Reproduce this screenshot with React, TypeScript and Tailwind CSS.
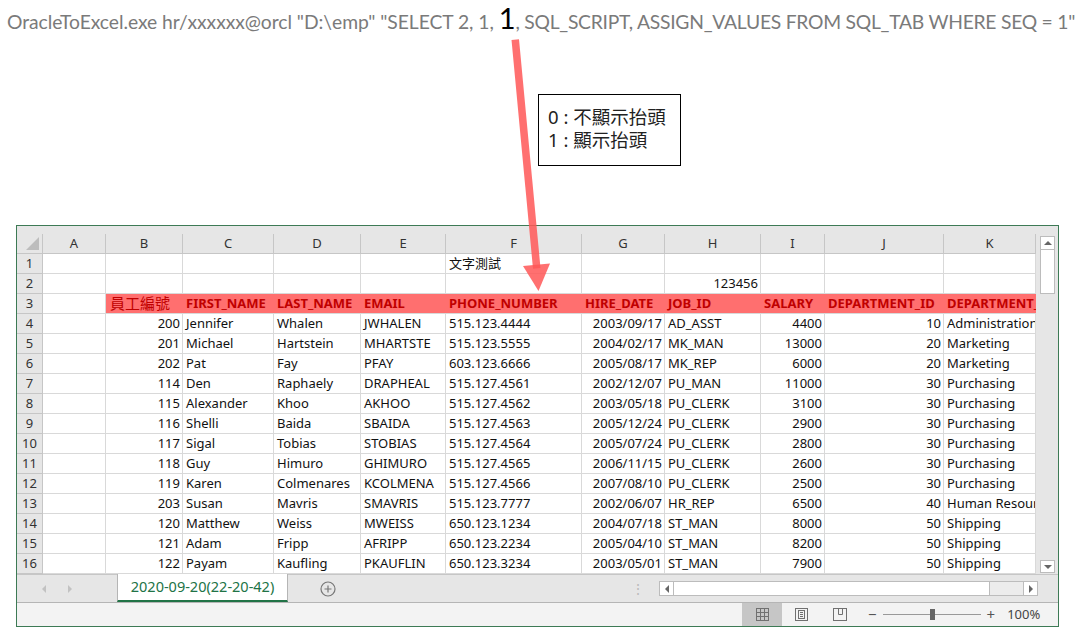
import React from "react"

const cellFont = "font-['Noto_Sans','Noto_Sans_CJK_TC',sans-serif]"

const letters = ["A", "B", "C", "D", "E", "F", "G", "H", "I", "J", "K"]

// r = right aligned
type Cell = string | { t: string; r: boolean }
const R = (t: string) => ({ t, r: true })

const rows: Cell[][] = [
  ["", "", "", "", "", "文字測試", "", "", "", "", ""],
  ["", "", "", "", "", "", "", R("123456"), "", "", ""],
  [],
  ["", R("200"), "Jennifer", "Whalen", "JWHALEN", "515.123.4444", R("2003/09/17"), "AD_ASST", R("4400"), R("10"), "Administration"],
  ["", R("201"), "Michael", "Hartstein", "MHARTSTE", "515.123.5555", R("2004/02/17"), "MK_MAN", R("13000"), R("20"), "Marketing"],
  ["", R("202"), "Pat", "Fay", "PFAY", "603.123.6666", R("2005/08/17"), "MK_REP", R("6000"), R("20"), "Marketing"],
  ["", R("114"), "Den", "Raphaely", "DRAPHEAL", "515.127.4561", R("2002/12/07"), "PU_MAN", R("11000"), R("30"), "Purchasing"],
  ["", R("115"), "Alexander", "Khoo", "AKHOO", "515.127.4562", R("2003/05/18"), "PU_CLERK", R("3100"), R("30"), "Purchasing"],
  ["", R("116"), "Shelli", "Baida", "SBAIDA", "515.127.4563", R("2005/12/24"), "PU_CLERK", R("2900"), R("30"), "Purchasing"],
  ["", R("117"), "Sigal", "Tobias", "STOBIAS", "515.127.4564", R("2005/07/24"), "PU_CLERK", R("2800"), R("30"), "Purchasing"],
  ["", R("118"), "Guy", "Himuro", "GHIMURO", "515.127.4565", R("2006/11/15"), "PU_CLERK", R("2600"), R("30"), "Purchasing"],
  ["", R("119"), "Karen", "Colmenares", "KCOLMENA", "515.127.4566", R("2007/08/10"), "PU_CLERK", R("2500"), R("30"), "Purchasing"],
  ["", R("203"), "Susan", "Mavris", "SMAVRIS", "515.123.7777", R("2002/06/07"), "HR_REP", R("6500"), R("40"), "Human Resources"],
  ["", R("120"), "Matthew", "Weiss", "MWEISS", "650.123.1234", R("2004/07/18"), "ST_MAN", R("8000"), R("50"), "Shipping"],
  ["", R("121"), "Adam", "Fripp", "AFRIPP", "650.123.2234", R("2005/04/10"), "ST_MAN", R("8200"), R("50"), "Shipping"],
  ["", R("122"), "Payam", "Kaufling", "PKAUFLIN", "650.123.3234", R("2003/05/01"), "ST_MAN", R("7900"), R("50"), "Shipping"],
  [],
]

const heads = ["員工編號", "FIRST_NAME", "LAST_NAME", "EMAIL", "PHONE_NUMBER", "HIRE_DATE", "JOB_ID", "SALARY", "DEPARTMENT_ID", "DEPARTMENT_NAME"]

const gridCols = "grid grid-cols-[26px_63px_77px_91px_87px_85px_136px_83px_96px_64px_119px_92px]"

function DataRow({ n, cells }: { n: number; cells: Cell[] }) {
  return (
    <div className={`${gridCols} h-[20px]`}>
      <div className="bg-[#e6e6e6] border-r border-b border-[#c6c6c6] text-center text-[13px] leading-[19px] text-[#333]">{n}</div>
      {letters.map((_, i) => {
        const c = cells[i] ?? ""
        const t = typeof c === "string" ? c : c.t
        const right = typeof c !== "string"
        return (
          <div
            key={i}
            className={`border-r border-b border-[#d9d9d9] px-[3px] text-[13px] leading-[19px] whitespace-nowrap overflow-hidden text-[#111] ${right ? "text-right pr-[2px]" : ""}`}
          >
            {t}
          </div>
        )
      })}
    </div>
  )
}

function HeadRow() {
  return (
    <div className={`${gridCols} h-[20px]`}>
      <div className="bg-[#e6e6e6] border-r border-b border-[#c6c6c6] text-center text-[13px] leading-[19px] text-[#333]">3</div>
      <div className="border-r border-b border-[#d9d9d9]" />
      {heads.map((h, i) => (
        <div
          key={h}
          className={`bg-[#ff6f6f] border-b border-[#d9d9d9] px-[3px] leading-[19px] whitespace-nowrap overflow-hidden text-[#c00000] ${i === 0 ? "text-[15px] pl-[4px]" : "text-[13px] font-bold"}`}
        >
          {h}
        </div>
      ))}
    </div>
  )
}

function GridIcon() {
  return (
    <svg width="13" height="13" viewBox="0 0 13 13" fill="none" stroke="#707070" strokeWidth="1">
      <rect x="0.5" y="0.5" width="12" height="12" />
      <path d="M4.5 0.5v12M8.5 0.5v12M0.5 4.5h12M0.5 8.5h12" />
    </svg>
  )
}

function PageIcon() {
  return (
    <svg width="13" height="13" viewBox="0 0 13 13" fill="none" stroke="#707070" strokeWidth="1">
      <rect x="0.5" y="0.5" width="12" height="12" />
      <rect x="3.5" y="2.5" width="6" height="8" />
      <path d="M5 4.5h3M5 6.5h3M5 8.5h3" />
    </svg>
  )
}

function BreakIcon() {
  return (
    <svg width="14" height="13" viewBox="0 0 14 13" fill="none" stroke="#707070" strokeWidth="1">
      <rect x="0.5" y="0.5" width="13" height="12" />
      <path d="M5.5 0.5v6h4v-6" />
    </svg>
  )
}

export default function App() {
  return (
    <div className={`relative w-[1089px] h-[639px] bg-white overflow-hidden ${cellFont}`}>
      {/* command line + note */}
      <div className="h-[225px]">
        <p className="pl-[7px] pt-[3px] h-[38px] whitespace-nowrap text-[19.3px] tracking-[-0.05px] text-[#7a7a7a] font-['Lato',sans-serif]">
          OracleToExcel.exe hr/xxxxxx@orcl "D:\emp" "SELECT 2, 1, <span className="text-[29px] leading-[30px] text-black">1</span><span className="tracking-[-0.25px]">, SQL_SCRIPT, ASSIGN_VALUES FROM SQL_TAB WHERE SEQ = 1"</span>
        </p>
        <div className="ml-[538px] mt-[56px] w-[143px] h-[72px] border border-black px-[9px] pt-[10px] text-[18.5px] leading-[23px] text-[#222]">
          <div>0 : 不顯示抬頭</div>
          <div>1 : 顯示抬頭</div>
        </div>
      </div>

      {/* excel window */}
      <div className="ml-[16px] w-[1043px] h-[402px] border border-[#3d7a55] bg-[#e6e6e6] flex flex-col">
        <div className="h-[8px]" />
        <div className="flex h-[340px]">
          <div className="w-[1019px] overflow-hidden bg-white">
            <div className={`${gridCols} h-[20px] bg-[#e6e6e6]`}>
              <div className="border-r border-b border-[#c6c6c6] flex items-end justify-end p-[3px]">
                <div className="w-0 h-0 border-l-[13px] border-l-transparent border-b-[13px] border-b-[#bdbdbd]" />
              </div>
              {letters.map((l) => (
                <div key={l} className="border-r border-b border-[#c6c6c6] text-center text-[13px] leading-[19px] text-[#333]">
                  {l}
                </div>
              ))}
            </div>
            {rows.map((r, i) =>
              i === 2 ? <HeadRow key={i} /> : <DataRow key={i} n={i + 1} cells={r} />
            )}
          </div>
          <div className="flex-1 pl-[4px] pr-[2px] pt-[2px] pb-[1px]">
            <div className="h-full flex flex-col w-[15px]">
              <div className="h-[14px] bg-white border border-[#bcbcbc] flex items-center justify-center">
                <div className="w-0 h-0 border-x-[4px] border-x-transparent border-b-[4px] border-b-[#666]" />
              </div>
              <div className="h-[44px] bg-white border border-[#bcbcbc] border-t-0" />
              <div className="flex-1" />
              <div className="h-[13px] bg-white border border-[#bcbcbc] flex items-center justify-center">
                <div className="w-0 h-0 border-x-[4px] border-x-transparent border-t-[4px] border-t-[#666]" />
              </div>
            </div>
          </div>
        </div>

        {/* sheet tabs */}
        <div className="h-[29px] flex border-t border-[#c6c6c6] border-b border-b-[#b5b5b5]">
          <div className="w-[100px] flex items-center pl-[25px] gap-[22px]">
            <div className="w-0 h-0 border-y-[4px] border-y-transparent border-r-[4px] border-r-[#c2c2c2]" />
            <div className="w-0 h-0 border-y-[4px] border-y-transparent border-l-[4px] border-l-[#c2c2c2]" />
          </div>
          <div className="w-[171px] -mt-px bg-white border-x border-[#b5b5b5] border-b-[2px] border-b-[#217346] text-center text-[14.5px] leading-[25px] text-[#217346]">
            2020-09-20(22-20-42)
          </div>
          <div className="w-[80px] flex items-center justify-center">
            <svg width="16" height="16" viewBox="0 0 16 16" fill="none" stroke="#777" strokeWidth="1.2">
              <circle cx="8" cy="8" r="7" />
              <path d="M8 4.5v7M4.5 8h7" />
            </svg>
          </div>
          <div className="flex-1 flex items-center justify-end">
            <div className="text-[#bbb] text-[14px] leading-none mr-[14px]">⋮</div>
            <div className="w-[379px] h-[15px] mr-[20px] flex border border-[#bcbcbc] bg-[#ececec]">
              <div className="w-[14px] bg-white border-r border-[#bcbcbc] flex items-center justify-center">
                <div className="w-0 h-0 border-y-[4px] border-y-transparent border-r-[4px] border-r-[#666]" />
              </div>
              <div className="w-[316px] bg-white border-r border-[#bcbcbc]" />
              <div className="flex-1" />
              <div className="w-[14px] bg-white border-l border-[#bcbcbc] flex items-center justify-center">
                <div className="w-0 h-0 border-y-[4px] border-y-transparent border-l-[4px] border-l-[#666]" />
              </div>
            </div>
          </div>
        </div>

        {/* status bar */}
        <div className="flex-1 bg-[#f3f3f3] flex items-stretch">
          <div className="w-[725px]" />
          <div className="w-[40px] bg-[#c6c6c6] flex items-center justify-center">
            <GridIcon />
          </div>
          <div className="w-[38px] flex items-center justify-center">
            <PageIcon />
          </div>
          <div className="w-[40px] flex items-center justify-center">
            <BreakIcon />
          </div>
          <div className="flex items-center pl-[8px] text-[#555]">
            <span className="text-[15px] leading-none">−</span>
            <div className="relative w-[98px] h-px bg-[#999] mx-[6px]">
              <div className="absolute left-[47px] -top-[5px] w-[5px] h-[11px] bg-[#666]" />
            </div>
            <span className="text-[15px] leading-none">+</span>
            <span className="ml-[12px] text-[13px] text-[#444]">100%</span>
          </div>
        </div>
      </div>

      {/* annotation arrow */}
      <svg className="absolute inset-0 pointer-events-none" width="1089" height="639">
        <g fill="#ff5757" fillOpacity="0.85" stroke="none">
          <path d="M511.5 40 L519 39.3 L540.5 268 L533 268.7 Z" />
          <path d="M523 266 L550 263.5 L538.5 291 Z" />
        </g>
      </svg>
    </div>
  )
}
